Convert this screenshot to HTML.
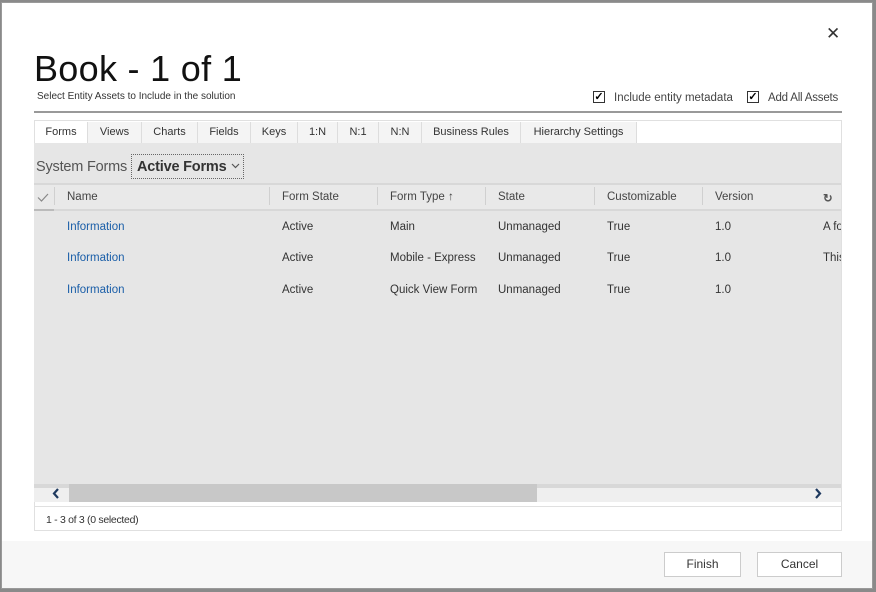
<!DOCTYPE html>
<html><head><meta charset="utf-8"><style>
*{margin:0;padding:0;box-sizing:border-box}
body{width:876px;height:592px;background:#8a8a8a;position:relative;overflow:hidden;font-family:"Liberation Sans",sans-serif;color:#333}
.a{position:absolute;white-space:nowrap}
#dlg{position:absolute;left:1px;top:2px;width:872px;height:587px;background:#fff;border:1px solid #9a9a9a}
.tab{position:absolute;top:122px;height:21px;font-size:11px;line-height:21px;text-align:center;background:#f4f4f4;border-right:1px solid #ddd;color:#333}
.h{position:absolute;top:191px;font-size:11.5px;color:#444;white-space:nowrap}
.sep{position:absolute;top:187px;width:1px;height:18px;background:#d0d0d0}
.c{position:absolute;font-size:11.5px;color:#333;white-space:nowrap}
.lnk{color:#1a5ea8}
</style></head><body>
<div id="dlg"></div>
<div class="a" style="left:826px;top:24px;font-size:17px;color:#333">✕</div>
<div class="a" style="left:34px;top:48px;font-size:36px;color:#111;letter-spacing:0.3px">Book - 1 of 1</div>
<div class="a" style="left:37px;top:91px;font-size:10px;color:#333">Select Entity Assets to Include in the solution</div>
<div class="a" style="left:593px;top:91px;width:12px;height:12px;border:1px solid #333;font-size:11px;line-height:10px;text-align:center;color:#000;font-weight:bold">✓</div>
<div class="a" style="left:614px;top:92px;font-size:11.5px;color:#444">Include entity metadata</div>
<div class="a" style="left:747px;top:91px;width:12px;height:12px;border:1px solid #333;font-size:11px;line-height:10px;text-align:center;color:#000;font-weight:bold">✓</div>
<div class="a" style="left:768px;top:92px;font-size:11.5px;color:#444;letter-spacing:-0.2px">Add All Assets</div>
<div class="a" style="left:34px;top:111px;width:808px;height:2px;background:#999"></div>
<div class="a" style="left:34px;top:120px;width:808px;height:411px;border:1px solid #e0e0e0;background:#fff"></div>
<div class="a" style="left:34px;top:143px;width:807px;height:345px;background:#e6e6e6"></div>
<div class="tab" style="left:35px;width:53px;background:#fff">Forms</div>
<div class="tab" style="left:88px;width:54px">Views</div>
<div class="tab" style="left:142px;width:56px">Charts</div>
<div class="tab" style="left:198px;width:53px">Fields</div>
<div class="tab" style="left:251px;width:47px">Keys</div>
<div class="tab" style="left:298px;width:40px">1:N</div>
<div class="tab" style="left:338px;width:41px">N:1</div>
<div class="tab" style="left:379px;width:43px">N:N</div>
<div class="tab" style="left:422px;width:99px">Business Rules</div>
<div class="tab" style="left:521px;width:116px">Hierarchy Settings</div>
<div class="a" style="left:36px;top:159px;font-size:14.5px;color:#555;letter-spacing:-0.2px">System Forms</div>
<div class="a" style="left:131px;top:154px;width:113px;height:25px;border:1px dotted #666"></div>
<div class="a" style="left:137px;top:159px;font-size:14.5px;font-weight:bold;color:#333;letter-spacing:-0.2px">Active Forms</div>
<svg class="a" style="left:231px;top:163px" width="9" height="6" viewBox="0 0 9 6"><path d="M1 1L4.5 4.5L8 1" fill="none" stroke="#555" stroke-width="1.2"/></svg>
<div class="a" style="left:34px;top:183px;width:807px;height:28px;background:#e9e9e9;border-top:2px solid #d8d8d8;border-bottom:2px solid #d8d8d8"></div>
<svg class="a" style="left:37px;top:193px" width="12" height="9" viewBox="0 0 12 9"><path d="M1 4.5L4.5 8L11 1" fill="none" stroke="#888" stroke-width="1.2"/></svg>
<div class="a" style="left:34px;top:209px;width:20px;height:2px;background:#bbb"></div>
<div class="sep" style="left:54px"></div>
<div class="h" style="left:67px">Name</div>
<div class="sep" style="left:269px"></div>
<div class="h" style="left:282px">Form State</div>
<div class="sep" style="left:377px"></div>
<div class="h" style="left:390px">Form Type ↑</div>
<div class="sep" style="left:485px"></div>
<div class="h" style="left:498px">State</div>
<div class="sep" style="left:594px"></div>
<div class="h" style="left:607px">Customizable</div>
<div class="sep" style="left:702px"></div>
<div class="h" style="left:715px">Version</div>
<div class="h" style="left:823px;font-weight:bold;color:#555">↻</div>
<div class="c lnk" style="left:67px;top:221px">Information</div><div class="c" style="left:282px;top:221px">Active</div><div class="c" style="left:390px;top:221px">Main</div><div class="c" style="left:498px;top:221px">Unmanaged</div><div class="c" style="left:607px;top:221px">True</div><div class="c" style="left:715px;top:221px">1.0</div><div class="c" style="left:823px;top:221px;width:18px;overflow:hidden">A form</div>
<div class="c lnk" style="left:67px;top:252px">Information</div><div class="c" style="left:282px;top:252px">Active</div><div class="c" style="left:390px;top:252px">Mobile - Express</div><div class="c" style="left:498px;top:252px">Unmanaged</div><div class="c" style="left:607px;top:252px">True</div><div class="c" style="left:715px;top:252px">1.0</div><div class="c" style="left:823px;top:252px;width:18px;overflow:hidden">This</div>
<div class="c lnk" style="left:67px;top:284px">Information</div><div class="c" style="left:282px;top:284px">Active</div><div class="c" style="left:390px;top:284px">Quick View Form</div><div class="c" style="left:498px;top:284px">Unmanaged</div><div class="c" style="left:607px;top:284px">True</div><div class="c" style="left:715px;top:284px">1.0</div>
<div class="a" style="left:34px;top:484px;width:807px;height:18px;background:#efefef;border-top:4px solid #d8d8d8"></div>
<div class="a" style="left:69px;top:484px;width:468px;height:18px;background:#c8c8c8"></div>
<svg class="a" style="left:52px;top:488px" width="8" height="11" viewBox="0 0 8 11"><path d="M6 1L2 5.5L6 10" fill="none" stroke="#1f3a5f" stroke-width="2.2"/></svg>
<svg class="a" style="left:814px;top:488px" width="8" height="11" viewBox="0 0 8 11"><path d="M2 1L6 5.5L2 10" fill="none" stroke="#1f3a5f" stroke-width="2.2"/></svg>
<div class="a" style="left:34px;top:506px;width:808px;height:1px;background:#e0e0e0"></div>
<div class="a" style="left:46px;top:514px;font-size:10.5px;color:#333;letter-spacing:-0.3px">1 - 3 of 3 (0 selected)</div>
<div class="a" style="left:2px;top:541px;width:870px;height:47px;background:#f7f7f7"></div>
<div class="a" style="left:664px;top:552px;width:77px;height:25px;border:1px solid #ccc;background:#fff;font-size:12px;line-height:23px;text-align:center;color:#333">Finish</div>
<div class="a" style="left:757px;top:552px;width:85px;height:25px;border:1px solid #ccc;background:#fff;font-size:12px;line-height:23px;text-align:center;color:#333">Cancel</div>
</body></html>
